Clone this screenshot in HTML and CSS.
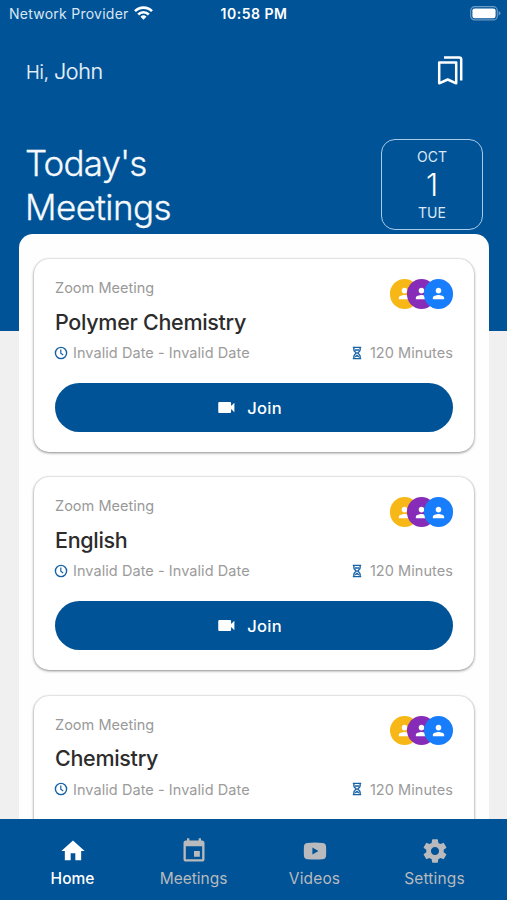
FILE: index.html
```html
<!DOCTYPE html>
<html lang="en">
<head>
<meta charset="utf-8">
<title>Today's Meetings</title>
<link rel="stylesheet" href="styles.css">
</head>
<body>
<svg class="defs" aria-hidden="true">
  <symbol id="person" viewBox="0 0 24 24"><path d="M12 12c2.210 0 4-1.790 4-4s-1.790-4-4-4-4 1.790-4 4 1.790 4 4 4zm0 2c-2.670 0-8 1.340-8 4v2h16v-2c0-2.660-5.330-4-8-4z"/></symbol>
  <symbol id="clock" viewBox="0 0 14 14"><circle cx="7" cy="7" r="5.600" fill="none" stroke="currentColor" stroke-width="1.400"/><path d="M6.800 3.600v3.600l2.400 1.700" fill="none" stroke="currentColor" stroke-width="1.200"/></symbol>
  <symbol id="hourglass" viewBox="0 0 10 14"><path d="M.8 1.400h8.400M.8 12.600h8.400M1.900 1.400v2.300q0 1.200 1.100 2L4.300 7 3 8.300q-1.100.8-1.100 2v2.300M8.100 1.400v2.300q0 1.200-1.100 2L5.700 7 7 8.300q1.100.8 1.100 2v2.300M3 4h4M3.200 10.900L5 9.500l1.800 1.400" fill="none" stroke="currentColor" stroke-width="1.400"/></symbol>
  <symbol id="camera" viewBox="0 0 18 12"><path d="M1.200 0h11.600q1.200 0 1.200 1.200V4.300L17.600.8v10.400L14 7.700v3.100q0 1.200-1.200 1.200H1.200Q0 12 0 10.800V1.200Q0 0 1.200 0z"/></symbol>
</svg>
<div class="app">
  <div class="status">
    <div class="carrier"><span>Network Provider</span>
      <svg class="wifi" viewBox="0 0 19 14"><g fill="none" stroke="currentColor" stroke-width="2.600"><path d="M1 5.200a12 12 0 0 1 17 0"/><path d="M4.200 8.500a7.500 7.500 0 0 1 10.600 0"/></g><path d="M9.500 13.800L6.500 10.800a4.300 4.300 0 0 1 6 0z"/></svg>
    </div>
    <span class="time">10:58 PM</span>
    <div class="power"><svg class="battery" viewBox="0 0 31 15"><rect x=".7" y=".7" width="26.600" height="13.200" rx="4" fill="none" stroke="#6b9cc4" stroke-width="1.200"/><rect x="2.400" y="2.400" width="23.200" height="9.800" rx="2.200"/><path d="M28.600 5v4.700q1.900-.8 1.900-2.350T28.600 5z" fill="#6b9cc4"/></svg></div>
  </div>
  <div class="hello">
    <p class="greeting">Hi, <span>John</span></p>
    <svg class="bookmarks" viewBox="0 0 26 30"><path d="M2.200 6.500h17v20.800l-8.500-3.800-8.500 3.800zM7 1.500h15.200q2 0 2 2V24.500" fill="none" stroke="currentColor" stroke-width="2.500" stroke-linejoin="round"/></svg>
  </div>
  <div class="heading">
    <h1><span>Today's</span><br>Meetings</h1>
    <div class="date"><span>OCT</span><strong>1</strong><span>TUE</span></div>
  </div>
  <main class="sheet">
    <article class="card">
      <div class="top"><div><p class="kind">Zoom Meeting</p><h2>Polymer Chemistry</h2></div>
        <div class="people"><i class="amber"><svg><use href="#person"/></svg></i><i class="purple"><svg><use href="#person"/></svg></i><i class="blue"><svg><use href="#person"/></svg></i></div></div>
      <div class="meta"><svg class="clock"><use href="#clock"/></svg><span class="when">Invalid Date - Invalid Date</span><svg class="glass"><use href="#hourglass"/></svg><span class="length">120 Minutes</span></div>
      <button class="join"><svg><use href="#camera"/></svg><span>Join</span></button>
    </article>
    <article class="card">
      <div class="top"><div><p class="kind">Zoom Meeting</p><h2>English</h2></div>
        <div class="people"><i class="amber"><svg><use href="#person"/></svg></i><i class="purple"><svg><use href="#person"/></svg></i><i class="blue"><svg><use href="#person"/></svg></i></div></div>
      <div class="meta"><svg class="clock"><use href="#clock"/></svg><span class="when">Invalid Date - Invalid Date</span><svg class="glass"><use href="#hourglass"/></svg><span class="length">120 Minutes</span></div>
      <button class="join"><svg><use href="#camera"/></svg><span>Join</span></button>
    </article>
    <article class="card">
      <div class="top"><div><p class="kind">Zoom Meeting</p><h2>Chemistry</h2></div>
        <div class="people"><i class="amber"><svg><use href="#person"/></svg></i><i class="purple"><svg><use href="#person"/></svg></i><i class="blue"><svg><use href="#person"/></svg></i></div></div>
      <div class="meta"><svg class="clock"><use href="#clock"/></svg><span class="when">Invalid Date - Invalid Date</span><svg class="glass"><use href="#hourglass"/></svg><span class="length">120 Minutes</span></div>
    </article>
  </main>
  <nav class="tabs">
    <a class="active"><svg viewBox="0 0 24 24"><path d="M10 20v-6h4v6h5v-8h3L12 3 2 12h3v8z"/></svg><span>Home</span></a>
    <a><svg viewBox="0 0 24 24"><path d="M17 12h-5v5h5v-5zM16 1v2H8V1H6v2H5c-1.110 0-1.990.9-1.990 2L3 19c0 1.100.89 2 2 2h14c1.100 0 2-.9 2-2V5c0-1.100-.9-2-2-2h-1V1h-2zm3 18H5V8h14v11z"/></svg><span>Meetings</span></a>
    <a><svg viewBox="0 0 24 24"><path fill-rule="evenodd" d="M5 4.500Q12 4 19 4.500Q22 4.800 22.200 7.500Q22.500 12 22.200 16.500Q22 19.200 19 19.500Q12 20 5 19.500Q2 19.200 1.800 16.500Q1.500 12 1.800 7.500Q2 4.800 5 4.500zM9.600 8.700v6.600l5.600-3.300z"/></svg><span>Videos</span></a>
    <a><svg viewBox="0 0 24 24"><path d="M19.430 12.980c.04-.32.07-.64.07-.98s-.03-.66-.07-.98l2.110-1.650c.19-.15.24-.42.12-.64l-2-3.460c-.12-.22-.39-.3-.61-.22l-2.490 1c-.52-.4-1.080-.73-1.690-.98l-.38-2.650C14.460 2.180 14.250 2 14 2h-4c-.25 0-.46.18-.49.42l-.38 2.650c-.61.25-1.170.59-1.690.98l-2.490-1c-.23-.09-.49 0-.61.22l-2 3.460c-.13.22-.07.49.12.64l2.110 1.650c-.04.32-.07.65-.07.98s.03.66.07.98l-2.110 1.650c-.19.15-.24.42-.12.64l2 3.460c.12.22.39.3.61.22l2.490-1c.52.4 1.080.73 1.690.98l.38 2.650c.03.24.24.42.49.42h4c.25 0 .46-.18.49-.42l.38-2.650c.61-.25 1.170-.59 1.690-.98l2.490 1c.23.09.49 0 .61-.22l2-3.460c.12-.22.07-.49-.12-.64l-2.110-1.650zM12 15.500c-1.930 0-3.500-1.570-3.500-3.500s1.570-3.500 3.500-3.500 3.500 1.570 3.500 3.500-1.570 3.500-3.500 3.500z"/></svg><span>Settings</span></a>
  </nav>
</div>
</body>
</html>
```
FILE: styles.css
```css
* { box-sizing: border-box; }
body { margin: 0; font-family: Inter, "Liberation Sans", sans-serif; color: #fff; }
h1, h2, p { margin: 0; font-weight: 400; }
svg { display: block; fill: currentColor; flex: none; }
.defs { display: none; }
.app { height: 900px; display: flex; flex-direction: column; overflow: hidden; background: linear-gradient(#005397 331px, #f0f0f0 331px); }
.status { height: 27px; flex: none; padding: 0 6px 0 9px; display: grid; grid-template-columns: 1fr auto 1fr; align-items: center; }
.carrier { display: flex; align-items: center; gap: 5px; font-size: 14px; letter-spacing: .25px; color: #d9e6f2; }
.wifi { width: 19px; height: 14px; color: #fff; margin-top: -1px; }
.time { font-size: 14px; font-weight: 600; letter-spacing: .5px; margin-left: -2px; }
.power { display: flex; justify-content: flex-end; }
.battery { width: 31px; height: 15px; }
.hello { height: 87px; flex: none; padding: 0 44px 0 26px; display: flex; align-items: center; justify-content: space-between; }
.greeting { font-size: 18.500px; font-weight: 300; line-height: 30px; padding-top: 1px; color: #eaf2f9; letter-spacing: -.1px; -webkit-text-stroke: .2px #eaf2f9; }
.greeting span { font-size: 21.500px; letter-spacing: -.4px; }
.bookmarks { width: 26px; height: 30px; }
.heading { height: 120px; flex: none; padding: 25px 24px 0 25px; display: flex; justify-content: space-between; align-items: flex-start; }
h1 { font-size: 35px; line-height: 44px; font-weight: 300; letter-spacing: -.55px; color: #f5f9fc; padding-top: 2px; -webkit-text-stroke: .3px #f5f9fc; }
h1 span { letter-spacing: -.9px; }
.date { width: 102px; height: 91px; border: 1.500px solid #a8cbea; border-radius: 14px; display: flex; flex-direction: column; align-items: center; font-size: 14px; line-height: 20px; padding-top: 7px; color: #dce9f5; }
.date strong { font-size: 31px; font-weight: 300; line-height: 36px; color: #fff; }
.sheet { flex: 1; min-height: 0; overflow: hidden; margin: 0 18px 0 19px; padding: 25px 15px 0; background: #fefefe; border-radius: 14px 14px 0 0; }
.card { height: 193px; margin-bottom: 25.300px; padding: 19px 21px 20px; border-radius: 15px; background: #fff; box-shadow: 0 1px 3px rgba(0,0,0,.42), 0 0 2px rgba(0,0,0,.18); }
.top { height: 62.500px; display: flex; justify-content: space-between; }
.kind { font-size: 14.500px; line-height: 20px; letter-spacing: .02px; color: #999; }
h2 { font-size: 21.500px; line-height: 30px; margin-top: 8.500px; font-weight: 500; letter-spacing: -.3px; color: #2c2c2c; white-space: nowrap; }
.people { display: flex; padding-top: 1px; }
.people i { width: 29.500px; height: 29.500px; border-radius: 50%; display: grid; place-items: center; margin-left: -12.500px; }
.people svg { width: 17px; height: 17px; }
.amber { background: #f7b817; }
.purple { background: #862cb8; }
.blue { background: #187dfb; }
.meta { height: 24px; display: flex; align-items: center; color: #9b9b9b; font-size: 14.500px; letter-spacing: .06px; white-space: nowrap; }
.clock { width: 14px; height: 14px; color: #1762a5; margin-left: -1px; }
.when { margin-left: 5px; }
.glass { width: 10px; height: 14px; color: #1762a5; margin-left: auto; }
.length { margin-left: 8px; }
.join { width: 100%; height: 49px; margin-top: 18.500px; border: 0; border-radius: 25px; background: #005397; color: #fff; display: flex; justify-content: center; align-items: center; gap: 12px; padding: 0 9px 0 0; font: 500 16.500px Inter, sans-serif; letter-spacing: .3px; }
.join svg { width: 17px; height: 11px; margin-left: 1px; }
.tabs { height: 81px; flex: none; background: #005397; padding: 0 11px 0 12px; display: grid; grid-template-columns: repeat(4, 1fr); color: #b8babd; font-size: 15.500px; }
.tabs a { display: flex; flex-direction: column; align-items: center; padding-top: 18px; }
.tabs svg { width: 28px; height: 28px; }
.tabs a:nth-child(3) svg { width: 30px; height: 26px; margin: 1px 0; }
.tabs span { line-height: 24px; margin-top: 2px; }
.tabs a:nth-child(4) { padding-right: 2px; }
.tabs a:nth-child(3) span, .tabs a:nth-child(4) span { letter-spacing: .15px; }
.tabs .active { color: #fff; font-weight: 500; }
```
